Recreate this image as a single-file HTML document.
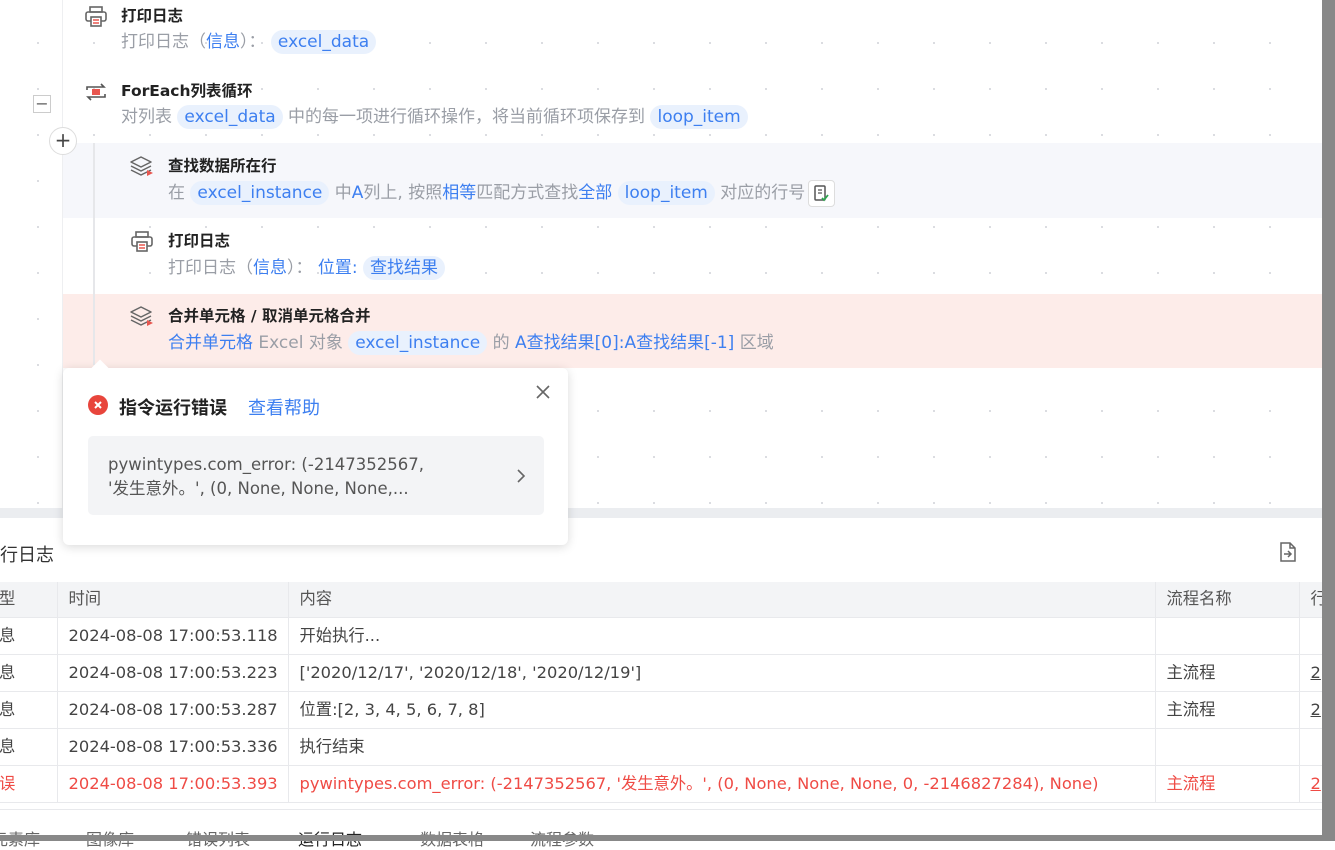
<!DOCTYPE html>
<html><head><meta charset="utf-8"><style>
*{margin:0;padding:0;box-sizing:border-box}
body{width:1335px;height:841px;overflow:hidden;position:relative;background:#fff;font-family:"DejaVu Sans","Noto Sans CJK SC",sans-serif;color:#333}
.a{position:absolute;white-space:nowrap}
.canvas{position:absolute;left:0;top:0;width:1322px;height:508px;background-color:#fff;background-image:radial-gradient(circle,#d4d6db 0.8px,transparent 1.2px);background-size:56px 46px;background-position:10px 20px}
.t{font-size:15.5px;font-weight:bold;color:#222}
.d{font-size:17px;color:#9a9ea6;line-height:24px}
.b{color:#3d7ff0}
.p{background:#e9f1fd;color:#3d7ff0;border-radius:12px;padding:2px 7px}
table{border-collapse:collapse;font-size:16.3px}
td{height:37px;border-bottom:1px solid #e8e9ec;border-right:1px solid #e8e9ec;padding-left:11px;color:#444;line-height:20px;vertical-align:middle}
tr.h td{height:35px;background:#f3f4f6;color:#555}
tr.e td{color:#ef4b45}
.tab{position:absolute;top:826px;font-size:16px;color:#666}
</style></head><body>
<div class="canvas"></div>
<div class="a" style="left:62px;top:0;width:1px;height:508px;background:#eeeff1"></div>
<div class="a" style="left:63px;top:143px;width:1259px;height:75px;background:#f6f7fb"></div>
<div class="a" style="left:63px;top:294px;width:1259px;height:74px;background:#fdece9"></div>
<div class="a" style="left:93px;top:143px;width:2px;height:222px;background:#e6e7ea"></div>

<svg class="a" style="left:84px;top:6px" width="24" height="22" viewBox="0 0 24 22"><rect x="6" y="1" width="12" height="5" fill="none" stroke="#666" stroke-width="1.6"/><rect x="2" y="6" width="20" height="9" rx="2" fill="none" stroke="#666" stroke-width="1.6"/><rect x="7" y="11" width="10" height="9" fill="#fff" stroke="#666" stroke-width="1.6"/><path d="M9 14h6M9 17h6" stroke="#e8564f" stroke-width="1.5"/></svg>
<div class="a t" style="left:121px;top:4px">打印日志</div>
<div class="a d" style="left:121px;top:30px">打印日志（<span class="b">信息</span>）： <span class="p">excel_data</span></div>

<svg class="a" style="left:85px;top:83px" width="22" height="18" viewBox="0 0 22 18"><path d="M2 7V4h17l-3-3M20 11v3H3l3 3" fill="none" stroke="#555" stroke-width="1.6"/><rect x="7" y="6" width="8" height="6" fill="#e8564f"/></svg>
<div class="a t" style="left:121px;top:79px">ForEach列表循环</div>
<div class="a d" style="left:121px;top:105px">对列表 <span class="p">excel_data</span> 中的每一项进行循环操作，将当前循环项保存到 <span class="p">loop_item</span></div>
<div class="a" style="left:33px;top:95px;width:18px;height:18px;border:1px solid #ccc;background:#fff;text-align:center;line-height:15px;font-size:16px;color:#666">−</div>
<div class="a" style="left:49px;top:127px;width:28px;height:28px;border:1px solid #ddd;border-radius:50%;background:#fff;text-align:center;line-height:25px;font-size:20px;color:#444">+</div>

<svg class="a" style="left:129px;top:155px" width="26" height="24" viewBox="0 0 26 24"><path d="M12 2l10 5-10 5-10-5z M2 11l10 5 10-5 M2 15l10 5 10-5" fill="none" stroke="#666" stroke-width="1.5" stroke-linejoin="round"/><path d="M18 15l6 3-6 3z" fill="#e8564f"/></svg>
<div class="a t" style="left:168px;top:154px">查找数据所在行</div>
<div class="a d" style="left:168px;top:181px">在 <span class="p">excel_instance</span> 中<span class="b">A</span>列上, 按照<span class="b">相等</span>匹配方式查找<span class="b">全部</span> <span class="p">loop_item</span> 对应的行号</div>
<div class="a" style="left:808px;top:180px;width:27px;height:27px;border:1px solid #ddd;border-radius:4px;background:#fff"></div>
<svg class="a" style="left:813px;top:184px" width="18" height="20" viewBox="0 0 18 20"><rect x="2" y="2" width="10" height="14" rx="1" fill="none" stroke="#555" stroke-width="1.5"/><path d="M5 6h4M5 9h4" stroke="#555" stroke-width="1.3"/><path d="M9 14l2 2 4-5" fill="none" stroke="#2da44e" stroke-width="1.8"/></svg>

<svg class="a" style="left:130px;top:231px" width="24" height="22" viewBox="0 0 24 22"><rect x="6" y="1" width="12" height="5" fill="none" stroke="#666" stroke-width="1.6"/><rect x="2" y="6" width="20" height="9" rx="2" fill="none" stroke="#666" stroke-width="1.6"/><rect x="7" y="11" width="10" height="9" fill="#fff" stroke="#666" stroke-width="1.6"/><path d="M9 14h6M9 17h6" stroke="#e8564f" stroke-width="1.5"/></svg>
<div class="a t" style="left:168px;top:229px">打印日志</div>
<div class="a d" style="left:168px;top:256px">打印日志（<span class="b">信息</span>）： <span class="b">位置:</span> <span class="p">查找结果</span></div>

<svg class="a" style="left:129px;top:305px" width="26" height="24" viewBox="0 0 26 24"><path d="M12 2l10 5-10 5-10-5z M2 11l10 5 10-5 M2 15l10 5 10-5" fill="none" stroke="#666" stroke-width="1.5" stroke-linejoin="round"/><path d="M18 15l6 3-6 3z" fill="#e8564f"/></svg>
<div class="a t" style="left:168px;top:304px">合并单元格 / 取消单元格合并</div>
<div class="a d" style="left:168px;top:331px"><span class="b">合并单元格</span> Excel 对象 <span class="p">excel_instance</span> 的 <span class="b">A查找结果[0]:A查找结果[-1]</span> 区域</div>

<div class="a" style="left:0;top:508px;width:1322px;height:10px;background:#ebedf0"></div>

<div class="a" style="left:0;top:541px;font-size:18px;color:#333">行日志</div>
<svg class="a" style="left:1278px;top:541px" width="20" height="22" viewBox="0 0 20 22"><path d="M3 2h9l5 5v13H3z M12 2v5h5" fill="none" stroke="#666" stroke-width="1.5"/><path d="M6 13h7M10 10l3 3-3 3" fill="none" stroke="#666" stroke-width="1.5"/></svg>
<table class="a" style="left:-12px;top:582px;width:1340px">
<tr class="h"><td style="width:69px">型</td><td style="width:231px">时间</td><td style="width:867px">内容</td><td style="width:144px">流程名称</td><td>行</td></tr>
<tr><td>息</td><td>2024-08-08 17:00:53.118</td><td>开始执行...</td><td></td><td></td></tr>
<tr><td>息</td><td>2024-08-08 17:00:53.223</td><td>['2020/12/17', '2020/12/18', '2020/12/19']</td><td>主流程</td><td><u>2</u></td></tr>
<tr><td>息</td><td>2024-08-08 17:00:53.287</td><td>位置:[2, 3, 4, 5, 6, 7, 8]</td><td>主流程</td><td><u>2</u></td></tr>
<tr><td>息</td><td>2024-08-08 17:00:53.336</td><td>执行结束</td><td></td><td></td></tr>
<tr class="e"><td>误</td><td>2024-08-08 17:00:53.393</td><td>pywintypes.com_error: (-2147352567, '发生意外。', (0, None, None, None, 0, -2146827284), None)</td><td>主流程</td><td><u>2</u></td></tr>
</table>
<div class="a" style="left:0;top:809px;width:1322px;height:1px;background:#e8e9ec"></div>
<div class="tab" style="left:-8px">元素库</div>
<div class="tab" style="left:86px">图像库</div>
<div class="tab" style="left:186px">错误列表</div>
<div class="tab" style="left:298px;color:#222">运行日志</div>
<div class="tab" style="left:420px">数据表格</div>
<div class="tab" style="left:530px">流程参数</div>

<div class="a" style="left:63px;top:368px;width:505px;height:177px;background:#fff;border-radius:6px;box-shadow:0 2px 10px rgba(0,0,0,.15)"></div>
<div class="a" style="left:94px;top:362px;width:12px;height:12px;background:#fff;transform:rotate(45deg)"></div>
<svg class="a" style="left:87px;top:394px" width="22" height="22" viewBox="0 0 22 22"><circle cx="11" cy="11" r="10" fill="#e8453c"/><path d="M8 8l6 6M14 8l-6 6" stroke="#fff" stroke-width="2"/></svg>
<div class="a" style="left:119px;top:394px;font-size:18px;font-weight:bold;color:#222">指令运行错误</div>
<div class="a" style="left:248px;top:394px;font-size:18px;color:#3d7ff0">查看帮助</div>
<svg class="a" style="left:535px;top:384px" width="16" height="16" viewBox="0 0 16 16"><path d="M2 2l12 12M14 2L2 14" stroke="#666" stroke-width="1.6"/></svg>
<div class="a" style="left:88px;top:436px;width:456px;height:79px;background:#f3f4f6;border-radius:5px"></div>
<div class="a" style="left:108px;top:453px;font-size:16.5px;color:#555;line-height:24px">pywintypes.com_error: (-2147352567,<br>'发生意外。', (0, None, None, None,...</div>
<svg class="a" style="left:516px;top:468px" width="10" height="16" viewBox="0 0 10 16"><path d="M2 2l6 6-6 6" fill="none" stroke="#666" stroke-width="1.6"/></svg>

<div class="a" style="left:1322px;top:0;width:13px;height:841px;background:#888"></div>
<div class="a" style="left:0;top:835px;width:1335px;height:6px;background:#888"></div>
</body></html>
